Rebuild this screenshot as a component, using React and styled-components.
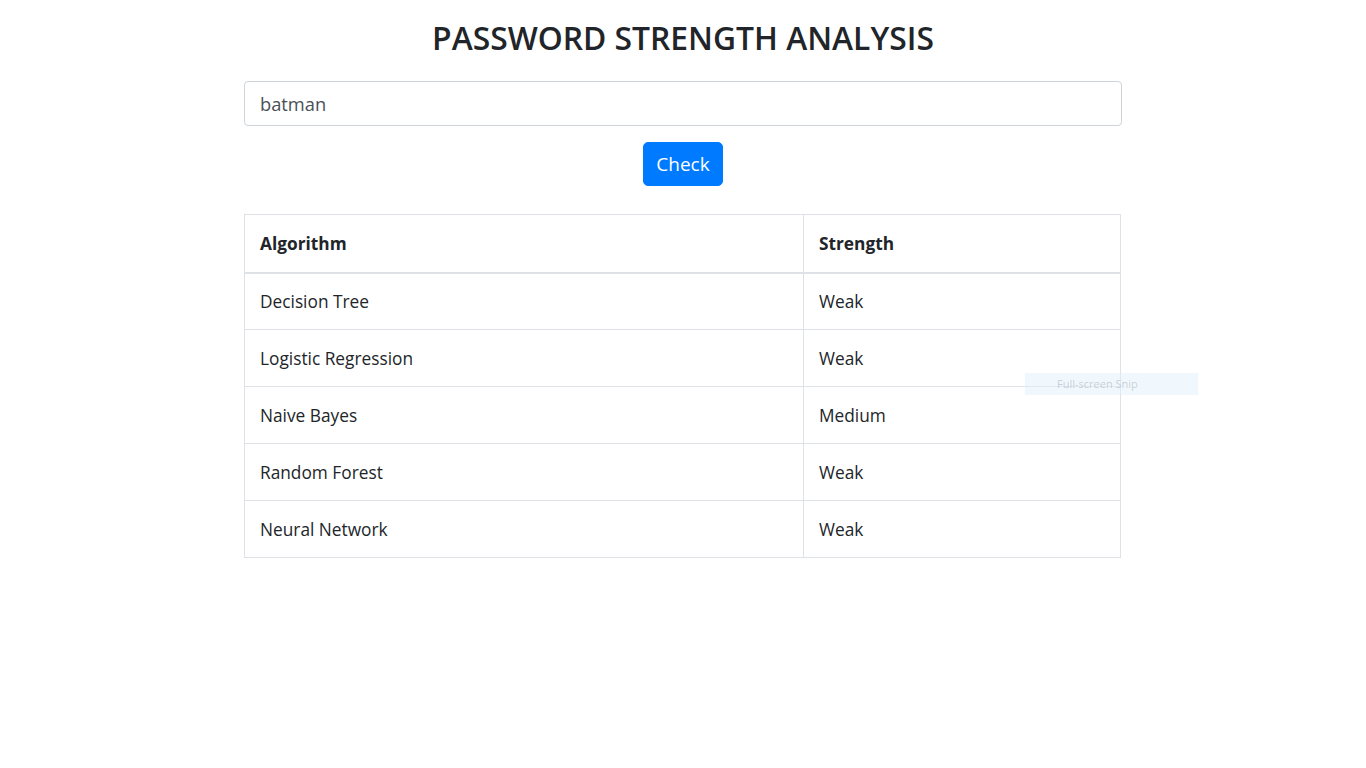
import React, { useState } from "react"
import styled, { createGlobalStyle } from "styled-components"

const GlobalStyle = createGlobalStyle`
  html, body {
    margin: 0;
    padding: 0;
    background: #ffffff;
    font-family: "Open Sans", "Noto Sans", "Liberation Sans", sans-serif;
    color: #212529;
  }
  * { box-sizing: border-box; }
`

const rows = [
    { algorithm: "Decision Tree", strength: "Weak" },
    { algorithm: "Logistic Regression", strength: "Weak" },
    { algorithm: "Naive Bayes", strength: "Medium" },
    { algorithm: "Random Forest", strength: "Weak" },
    { algorithm: "Neural Network", strength: "Weak" },
]

export default function App() {
    const [password, setPassword] = useState("batman")
    return (
        <>
            <GlobalStyle />
            <Page>
                <Title>PASSWORD STRENGTH ANALYSIS</Title>
                <Input value={password} onChange={(e) => setPassword(e.target.value)} />
                <ButtonRow>
                    <CheckButton>Check</CheckButton>
                </ButtonRow>
                <Table>
                    <thead>
                        <tr>
                            <Th $wide>Algorithm</Th>
                            <Th>Strength</Th>
                        </tr>
                    </thead>
                    <tbody>
                        {rows.map((r) => (
                            <tr key={r.algorithm}>
                                <Td>{r.algorithm}</Td>
                                <Td>{r.strength}</Td>
                            </tr>
                        ))}
                    </tbody>
                </Table>
            </Page>
            <Snip>Full-screen Snip</Snip>
        </>
    )
}

const Page = styled.div({
    width: "878px",
    margin: "0 auto",
    paddingTop: "16px",
    display: "flex",
    flexDirection: "column",
})

const Title = styled.h1({
    margin: "0",
    height: "65px",
    fontSize: "31.8px",
    fontWeight: 600,
    lineHeight: "44px",
    textAlign: "center",
    color: "#212529",
})

const Input = styled.input({
    width: "100%",
    height: "45px",
    padding: "0 15px",
    border: "1px solid #ced4da",
    borderRadius: "4px",
    fontFamily: "inherit",
    fontSize: "18.3px",
    color: "#495057",
    outline: "none",
})

const ButtonRow = styled.div({
    display: "flex",
    justifyContent: "center",
    marginTop: "16px",
})

const CheckButton = styled.button({
    width: "80px",
    height: "44px",
    background: "#007bff",
    border: "1px solid #007bff",
    borderRadius: "5px",
    color: "#ffffff",
    fontFamily: "inherit",
    fontSize: "19px",
    cursor: "pointer",
})

const Table = styled.table({
    marginTop: "28px",
    width: "877px",
    borderCollapse: "collapse",
    fontSize: "17.3px",
    color: "#212529",
})

const Th = styled.th(({ $wide }) => ({
    width: $wide ? "559px" : "auto",
    height: "58px",
    padding: "0 15px",
    textAlign: "left",
    fontWeight: 700,
    border: "1px solid #dee2e6",
    borderBottom: "2px solid #dee2e6",
}))

const Td = styled.td({
    height: "57px",
    padding: "0 15px",
    border: "1px solid #dee2e6",
})

const Snip = styled.div({
    position: "absolute",
    left: "1025px",
    top: "373px",
    width: "173px",
    height: "22px",
    background: "rgba(225, 240, 252, 0.5)",
    color: "rgba(120, 130, 140, 0.35)",
    fontSize: "11px",
    lineHeight: "22px",
    paddingLeft: "32px",
})
